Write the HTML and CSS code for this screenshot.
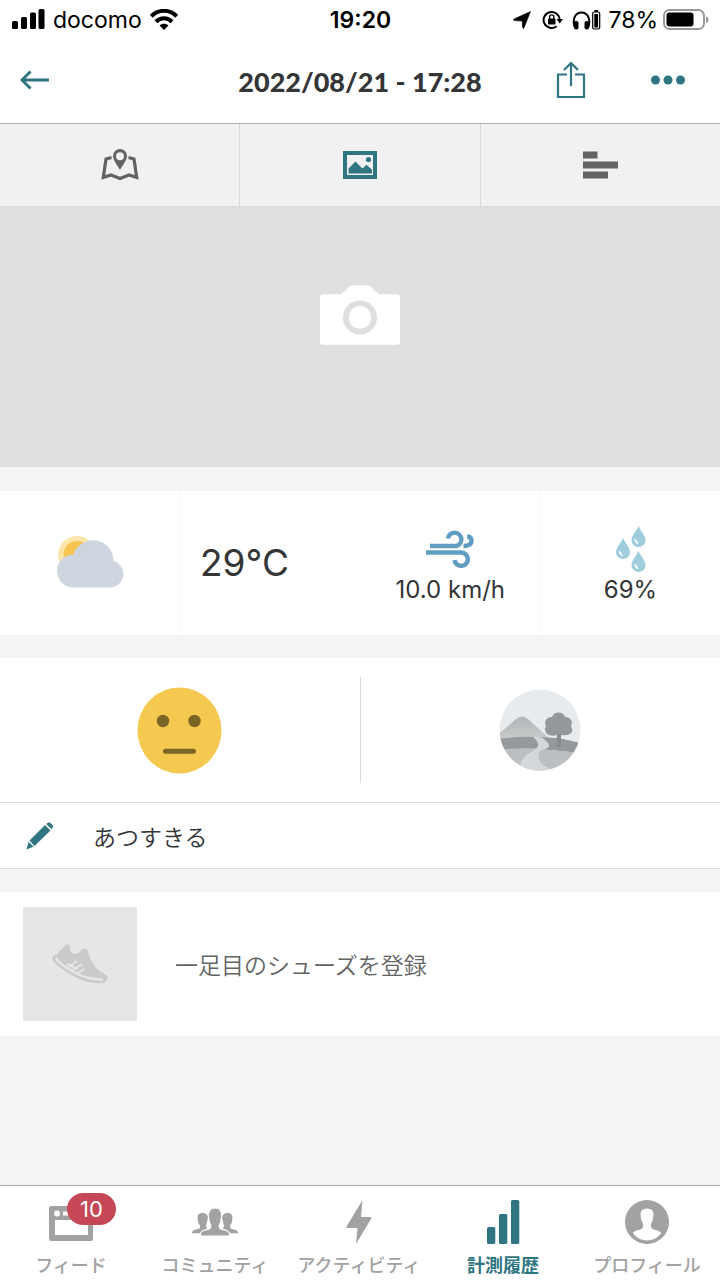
FILE: index.html
```html
<!DOCTYPE html>
<html lang="ja">
<head>
<meta charset="utf-8">
<meta name="viewport" content="width=device-width, initial-scale=1">
<title>2022/08/21 - 17:28</title>
<link rel="stylesheet" href="styles.css">
</head>
<body>
<div class="status">
  <div class="status-left">
    <svg width="33" height="22" viewBox="0 0 33 22" fill="currentColor" aria-hidden="true"><rect y="12" width="6" height="8" rx="1.6"/><rect x="9" y="8" width="6" height="12" rx="1.6"/><rect x="18" y="3.500" width="6" height="16.500" rx="1.6"/><rect x="26.500" y="0" width="6" height="20" rx="1.6"/></svg>
    <span>docomo</span>
    <svg width="28" height="22" viewBox="0 0 28 22" aria-hidden="true"><g fill="none" stroke="#000" stroke-width="4"><path d="M1.300 7.300C8.500 0 19.500 0 26.700 7.300"/><path d="M6 12.700C10.700 8.200 17.300 8.200 22 12.700"/></g><path d="M14 21 9.500 16.500C12 14 16 14 18.500 16.500Z"/></svg>
  </div>
  <time class="status-time">19:20</time>
  <div class="status-right">
    <svg class="location" width="18" height="18" viewBox="0 0 18 18" aria-hidden="true"><path d="M17.500 .5 11 16.800Q10 18.200 9.600 16.500L9.200 10 1.500 9.600Q-.3 9 1 8Z" stroke="#000" stroke-width=".6"/></svg>
    <svg width="21" height="20" viewBox="0 0 21 20" aria-hidden="true"><path d="M17.600 9.500A8 8 0 1 0 14.600 16.200" fill="none" stroke="#000" stroke-width="2"/><path d="M14.500 9h6.400l-3.200 4.500Z"/><rect x="6" y="8.500" width="7.500" height="6" rx="1"/><path d="M7.600 9V7a2.100 2.100 0 0 1 4.200 0v2" fill="none" stroke="#000" stroke-width="1.400"/></svg>
    <svg class="headphones" width="29" height="22" viewBox="0 0 29 22" aria-hidden="true"><path d="M2.500 18C-3 -1.500 22-1.500 16.500 18" fill="none" stroke="#000" stroke-width="2"/><rect x="2" y="12" width="4.500" height="8.500" rx="2"/><rect x="12.500" y="12" width="4.500" height="8.500" rx="2"/><path d="M22.500 1h3.500v2h-3.500z"/><rect x="20.700" y="3" width="7" height="17" rx="1.500" fill="none" stroke="#000" stroke-width="1.200"/><path d="M22.300 5h3.800v13.500h-3.800z"/></svg>
    <span>78%</span>
    <svg width="46" height="22" viewBox="0 0 46 22" aria-hidden="true"><rect x="1" y="1" width="40" height="19" rx="5.500" fill="none" stroke="#999" stroke-width="2"/><rect x="3.500" y="3.500" width="27" height="14" rx="3"/><path d="M43 7Q45.500 8 45.500 10.500T43 14Z" fill="#999"/></svg>
  </div>
</div>

<header class="header">
  <div class="header-start">
    <button class="icon-button" type="button" aria-label="戻る"><svg width="30" height="20" viewBox="0 0 30 20" fill="none" stroke="currentColor" stroke-width="3"><path d="M29 10H2.500M10.500 1.500 2 10l8.500 8.500"/></svg></button>
  </div>
  <h1 class="title">2022/08/21 - 17:28</h1>
  <div class="header-end">
    <button class="icon-button" type="button" aria-label="共有"><svg width="30" height="38" viewBox="0 0 30 38" fill="none" stroke="currentColor" stroke-width="2.200"><path d="M11 13.500H2v22.500h26v-22.500h-9M15 25V2M8 9l7-7 7 7"/></svg></button>
    <button class="icon-button" type="button" aria-label="その他"><svg width="36" height="38" viewBox="0 0 36 38" fill="currentColor"><circle cx="5.500" cy="19" r="4.500"/><circle cx="18" cy="19" r="4.500"/><circle cx="30.500" cy="19" r="4.500"/></svg></button>
  </div>
</header>

<nav class="tabs" aria-label="表示切替">
  <button class="tab" type="button" aria-label="地図"><svg width="38" height="32" viewBox="0 0 38 32"><path d="M10.500 8.500 5 10 2.300 28.500l7.700-2.500 9 3.500 9-3.500 7.700 2.500L33 10l-5.500-1.500" fill="none" stroke="currentColor" stroke-width="3.200"/><path fill="currentColor" fill-rule="evenodd" d="M19 0a7 7 0 0 1 7 7c0 4-3.500 8-7 14-3.500-6-7-10-7-14a7 7 0 0 1 7-7Zm0 3.200a4 4 0 1 0 0 8 4 4 0 0 0 0-8Z"/></svg></button>
  <button class="tab tab-active" type="button" aria-label="写真"><svg width="34" height="28" viewBox="0 0 34 28"><rect x="2" y="2" width="30" height="24" fill="none" stroke="currentColor" stroke-width="4"/><path fill="currentColor" d="m5.500 17.500 7-7 7 7 4-3.800 5.500 5V22.500H5.500Z"/><circle cx="25.500" cy="8.500" r="2.600" fill="currentColor"/></svg></button>
  <button class="tab" type="button" aria-label="詳細"><svg width="36" height="28" viewBox="0 0 36 28" fill="currentColor"><path d="M1 .5h14.500v7H1zM1 10.500h35v7H1zM1 20.500h25v7H1z"/></svg></button>
</nav>

<main class="main">
  <button class="photo" type="button" aria-label="写真を追加">
    <svg width="80" height="60" viewBox="0 0 81 60"><path fill="#fff" d="M3 9h18L30 1q1-1 2-1h16q2 0 3 1l9 8h18q3 0 3 3v45q0 3-3 3H3q-3 0-3-3V12q0-3 3-3Z"/><circle cx="40.500" cy="32.500" r="14.300" fill="none" stroke="#dddfe1" stroke-width="6"/></svg>
  </button>

  <section class="weather" aria-label="天気">
    <div class="weather-cell">
      <svg width="68" height="56" viewBox="0 0 68 56" role="img" aria-label="晴れ時々曇り"><circle cx="21" cy="20" r="19" fill="#fce6ac"/><circle cx="21" cy="19.500" r="13.500" fill="#f5c451"/><path fill="#cfd5de" d="M17.500 52.500a16.500 16.500 0 0 1 0-33A20.500 20.500 0 0 1 57.500 26 13.500 13.500 0 0 1 54 52.500Z"/></svg>
    </div>
    <div class="weather-wide">
      <p class="temp">29°C</p>
      <div class="metric">
        <div class="metric-icon"><svg width="48" height="38" viewBox="0 0 48 38" fill="none" stroke="#609ec1" stroke-width="4.500" aria-hidden="true"><path d="M4 16h26a6.700 6.700 0 1 0-8-7.500M0 22.500h34.500a6.700 6.700 0 1 1-6 7.700M37.500 16c5 0 8-1.500 8-5.300 0-3-2-4.200-4.300-4.300"/></svg></div>
        <p class="metric-text">10.0 km/h</p>
      </div>
    </div>
    <div class="weather-cell metric">
      <div class="metric-icon"><svg width="32" height="46" viewBox="0 0 32 46" aria-hidden="true"><defs><g id="drop"><path d="M7 0C10 6 14 10 14 14.500A7 6.500 0 0 1 0 14.500C0 10 4 6 7 0Z" fill="#9fcddd"/><path d="M2.800 12.500c0 3 1.500 5 4 5.800-.2-2.500-2-4.500-4-5.800Z" fill="#fff"/></g></defs><use href="#drop" x="16.500"/><use href="#drop" x="1" y="12"/><use href="#drop" x="16.500" y="25"/></svg></div>
      <p class="metric-text">69%</p>
    </div>
  </section>

  <section class="mood" aria-label="コンディション">
    <button class="mood-cell" type="button" aria-label="気分"><svg width="85" height="87" viewBox="0 0 85 87"><ellipse cx="42.500" cy="43.500" rx="42" ry="43" fill="#f5c94f"/><circle cx="26" cy="34" r="6.200" fill="#7b6526"/><circle cx="57.500" cy="34" r="6.200" fill="#7b6526"/><path d="M28.500 64.300h28" stroke="#7b6526" stroke-width="5" stroke-linecap="round"/></svg></button>
    <button class="mood-cell" type="button" aria-label="コース"><svg width="82" height="82" viewBox="0 0 82 82"><defs><clipPath id="disc"><circle cx="41" cy="41" r="40.500"/></clipPath><linearGradient id="hill" x1="0" y1="0" x2="0" y2="1"><stop offset="0" stop-color="#b3b6b8"/><stop offset="1" stop-color="#c9cbcc"/></linearGradient></defs><g clip-path="url(#disc)"><path fill="#e7ebee" d="M0 0h82v82H0z"/><path fill="url(#hill)" d="M0 45 17 30Q23 25 29 30L52 51H0Z"/><path fill="#96999b" d="M0 50Q20 47 37 48L59 49 82 54V64L40 60Q18 59 0 62Z"/><path fill="#bbbfc1" d="M0 61Q20 58 41 60L82 64V82H0Z"/><path fill="#d5d8da" d="M34 48q6 5 5 9-1 2-7 6-14 9-10 19h35Q37 76 40 64q1-3 6-4 6-2 3-6-4-5-9-6Z"/><path fill="#898c8e" d="M58 43h4v15h-4z"/><path fill="#95989a" d="M50 46a6 6 0 0 1-3-9 6 6 0 0 1 6-9 7 7 0 0 1 13 0 6 6 0 0 1 6 9q4 8-5 9-4 1-7-1-5 3-10 1Z"/></g></svg></button>
  </section>

  <button class="note" type="button">
    <svg width="28" height="28" viewBox="0 0 28 28" fill="currentColor" aria-hidden="true"><path d="m19 3 5.500 5.500L8.500 24 3.500 18.500ZM20.200 2 22 .700q1-.7 2 0L26.700 3.300q.8 1 0 2L25.500 7.300ZM2.700 19.800 7.500 24.800.3 27.500Z"/></svg>
    <span>あつすきる</span>
  </button>

  <button class="shoe" type="button">
    <span class="shoe-thumb"><svg width="56" height="40" viewBox="0 0 56 40" aria-hidden="true"><path fill="#cacaca" d="M.5 15Q0 12 5 10L12 3q2-4 5-2 2 1 1 5 1 3 5 4 4 0 6-4 3-3 7 0 1 8 6 15 3 5 9 8 6 3 4 7-2 4-12 3-13-1-27-10Q2 20 .5 15Z"/><g fill="none" stroke="#e6e6e6"><path stroke-width="2.500" d="M4 14Q6 19 20 27 35 36 51 35.500"/><path stroke-width="2" d="m17 23 8-6M21 26l9-6M26 29l6-4M15 20l11 5"/></g></svg></span>
    <span>一足目のシューズを登録</span>
  </button>
</main>

<nav class="bottom" aria-label="メイン">
  <a class="bottom-item" href="#feed">
    <span class="bottom-icon"><svg width="44" height="44" viewBox="0 0 44 44"><path fill="currentColor" fill-rule="evenodd" d="M2 6h40q2 0 2 2v31q0 2-2 2H2q-2 0-2-2V8q0-2 2-2Zm4 14v15h33V20ZM8 10.500a3 3 0 1 0 0 6 3 3 0 0 0 0-6Zm6 1v4h25v-4Z"/></svg><span class="badge">10</span></span>
    <span>フィード</span>
  </a>
  <a class="bottom-item" href="#community">
    <span class="bottom-icon"><svg width="46" height="44" viewBox="0 0 46 44" fill="currentColor"><defs><path id="side" d="M10.500 13c-3.500 0-5 1.800-5 5l.7 4.500q.6 2 1.800 3v2Q7.500 29 3 29.800 0 30.500 0 33.300h8q1-3 7-4.500l-1-3 2-8q-.5-4.800-5.500-4.800Z"/></defs><use href="#side"/><use href="#side" transform="matrix(-1 0 0 1 46 0)"/><path d="M8.500 36q-.3-4.500 3.500-5.500l5-1.300q1.800-.7 1.800-2.200v-2l-1.500-3.500-.8-5.500Q16.500 8 23 8t6.500 8l-.8 5.500-1.500 3.500v2q0 1.500 1.800 2.200l5 1.300q3.800 1 3.500 5.500Z" stroke="#fff" stroke-width="1"/></svg></span>
    <span>コミュニティ</span>
  </a>
  <a class="bottom-item" href="#activity">
    <span class="bottom-icon"><svg width="26" height="44" viewBox="0 0 26 44" fill="currentColor"><path d="M16.500 0 15 17h9.500q1.500 0 .8 1.500L10 44l1.500-16H2q-2 0-1.200-2Z"/></svg></span>
    <span>アクティビティ</span>
  </a>
  <a class="bottom-item bottom-active" href="#history" aria-current="page">
    <span class="bottom-icon"><svg width="34" height="44" viewBox="0 0 34 44" fill="currentColor"><rect x="1" y="27" width="8.300" height="17" rx="1.500"/><rect x="13" y="14" width="8.300" height="30" rx="1.500"/><rect x="25" y="0" width="8.300" height="44" rx="1.500"/></svg></span>
    <span>計測履歴</span>
  </a>
  <a class="bottom-item" href="#profile">
    <span class="bottom-icon"><svg width="44" height="44" viewBox="0 0 44 44"><circle cx="22" cy="22" r="22" fill="currentColor"/><path fill="#fff" d="M15.500 14.500q0-6 6.500-6t6.500 6l-.7 5.500-1.800 4v3q.5 2 4 3 6 1 6 3.500Q30 40.500 22 40.500T8 33.500q0-2.500 6-3.500 3.500-1 4-3v-3l-1.800-4Z"/></svg></span>
    <span>プロフィール</span>
  </a>
</nav>
</body>
</html>
```
FILE: styles.css
```css
* { box-sizing: border-box; }

body {
  margin: 0;
  min-height: 100vh;
  display: flex;
  flex-direction: column;
  background: #fff;
  color: #333536;
  font-family: Inter, "Noto Sans CJK JP", sans-serif;
}

button {
  margin: 0;
  padding: 0;
  border: 0;
  background: none;
  color: inherit;
  font: inherit;
  cursor: pointer;
}

svg { display: block; flex: none; }
p { margin: 0; }

.status {
  display: grid;
  grid-template-columns: 1fr auto 1fr;
  align-items: center;
  height: 40px;
  padding: 0 11px 0 12px;
  color: #000;
  font-size: 23px;
  line-height: 40px;
}
.status-left { display: flex; align-items: center; gap: 8px; }
.status-time { font-weight: 600; }
.status-right {
  display: flex;
  align-items: center;
  justify-content: flex-end;
  gap: 5px;
}
.location { margin-right: 6px; }
.headphones { margin: 0 2px 0 4px; }

.header {
  display: grid;
  grid-template-columns: 1fr auto 1fr;
  align-items: center;
  height: 84px;
  padding: 0 34px 0 20px;
  border-bottom: 1px solid #b1b1b1;
}
.title {
  margin: 0;
  padding-left: 14px;
  font-family: Lato, Inter, sans-serif;
  font-size: 27px;
  font-weight: 900;
  line-height: 36px;
}
.icon-button { color: #2f7582; }
.header-end {
  display: flex;
  justify-content: flex-end;
  gap: 64px;
  padding-bottom: 4px;
}

.tabs {
  display: flex;
  height: 83px;
  background: #f1f1f1;
  border-bottom: 1px solid #d9dbdb;
}
.tab {
  flex: 1;
  display: flex;
  align-items: center;
  justify-content: center;
  color: #626462;
}
.tab + .tab { border-left: 1px solid #d6d8d8; }
.tab-active { color: #2f7582; }

.main {
  flex: 1;
  display: flex;
  flex-direction: column;
  background: #f4f4f4;
}

.photo {
  display: flex;
  justify-content: center;
  height: 260px;
  padding-top: 78px;
  background: #dddfe1;
}

.weather {
  display: grid;
  grid-template-columns: 1fr 2fr 1fr;
  height: 144px;
  margin: 24px 0 23px;
  background: #fff;
}
.weather > * + * { border-left: 1px solid #f6f6f6; }
.weather-cell {
  display: flex;
  align-items: center;
  justify-content: center;
}
.weather-wide {
  display: grid;
  grid-template-columns: 1fr 1fr;
  align-items: center;
}
.temp { padding-left: 19px; font-size: 37px; line-height: 48px; }
.metric {
  display: flex;
  flex-direction: column;
  align-items: center;
  justify-content: center;
  padding-top: 4px;
}
.metric-icon { display: flex; align-items: center; height: 50px; }
.metric-text { font-size: 24px; line-height: 32px; }

.mood {
  display: flex;
  height: 144px;
  padding: 19px 0;
  background: #fff;
}
.mood-cell {
  flex: 1;
  display: flex;
  align-items: center;
  justify-content: center;
}
.mood-cell + .mood-cell { border-left: 1px solid #d9dadb; }

.note {
  display: flex;
  align-items: center;
  gap: 39px;
  height: 67px;
  margin-bottom: 23px;
  padding: 0 26px;
  border: solid #dcddde;
  border-width: 1px 0;
  background: #fff;
  font-size: 23px;
  font-weight: 350;
  text-align: left;
}
.note svg { color: #2f7582; }

.shoe {
  display: flex;
  align-items: center;
  gap: 38px;
  height: 144px;
  padding: 0 23px;
  background: #fff;
  color: #646464;
  font-size: 23px;
  font-weight: 350;
  text-align: left;
}
.shoe-thumb {
  display: grid;
  place-items: center;
  width: 114px;
  height: 114px;
  background: #e6e6e6;
}

.bottom {
  display: grid;
  grid-template-columns: repeat(5, 1fr);
  height: 95px;
  border-top: 1px solid #a9a9a9;
  background: #fff;
}
.bottom-item {
  display: flex;
  flex-direction: column;
  align-items: center;
  gap: 9px;
  padding: 14px 2px 0 0;
  color: #a2a2a2;
  font-size: 18px;
  font-weight: 500;
  line-height: 26px;
  text-decoration: none;
  white-space: nowrap;
}
.bottom-active { color: #2f7582; font-weight: 700; }
.bottom-icon { position: relative; }
.badge {
  position: absolute;
  top: -7px;
  left: 18px;
  width: 49px;
  height: 32px;
  border-radius: 16px;
  background: #c64856;
  color: #fff;
  font-size: 22px;
  font-weight: 400;
  line-height: 32px;
  text-align: center;
}
```
